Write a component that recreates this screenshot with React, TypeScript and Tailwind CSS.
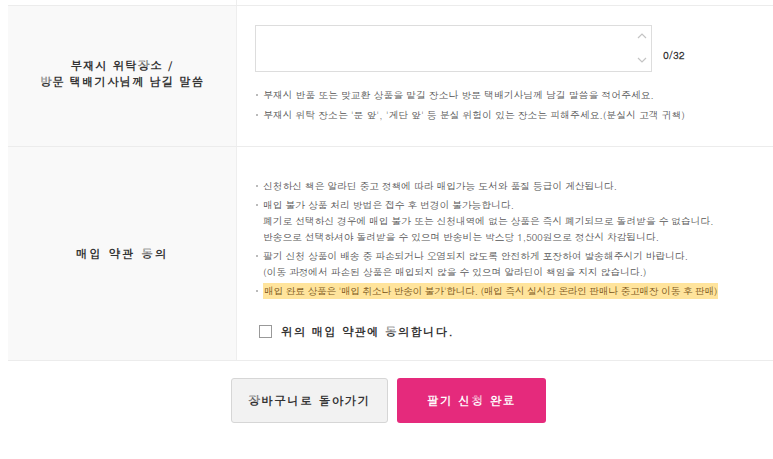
import React from 'react';

const font = "font-['Dotum','Noto_Sans_CJK_KR',sans-serif]";

function Note({ children, className = '' }: { children: React.ReactNode; className?: string }) {
  return (
    <li className={`relative pl-[8px] ${className}`}>
      <span className="absolute left-[1px] top-[7px] w-[2px] h-[2px] bg-[#bbb]" />
      {children}
    </li>
  );
}

export default function App() {
  return (
    <div className={`w-[773px] h-[459px] overflow-hidden bg-white text-[#333] ${font}`}>
      {/* end of previous row */}
      <div className="ml-2 h-[5px] grid grid-cols-[229px_1fr]">
        <div className="border-r border-[#eee]" />
        <div />
      </div>

      <div className="ml-2 border-t border-[#ececec]">
        {/* row 1 */}
        <div className="grid grid-cols-[229px_1fr] h-[141px] border-b border-[#ececec]">
          <div className="bg-[#f9f9f9] border-r border-[#eee] flex items-center justify-center text-center">
            <p className="text-[11.5px] font-bold leading-[16px] tracking-[1px] pb-[6px]">
              부재시 위탁장소 /<br />방문 택배기사님께 남길 말씀
            </p>
          </div>
          <div className="pl-[18px] pt-[19px]">
            <div className="flex items-end gap-[11px]">
              <div className="relative w-[397px] h-[47px] border border-[#ddd] bg-white">
                <svg className="absolute right-[4px] top-[6px]" width="10" height="8" viewBox="0 0 10 8">
                  <path d="M1 6 L5 2 L9 6" fill="none" stroke="#c4c4c4" strokeWidth="1.2" />
                </svg>
                <svg className="absolute right-[4px] bottom-[7px]" width="10" height="8" viewBox="0 0 10 8">
                  <path d="M1 2 L5 6 L9 2" fill="none" stroke="#c4c4c4" strokeWidth="1.2" />
                </svg>
              </div>
              <span className="text-[10px] font-bold text-[#333] mb-[9px]">0/32</span>
            </div>
            <ul className="mt-[15px] space-y-[4px] text-[10px] leading-[16px] tracking-[-0.2px] text-[#555]">
              <Note>부재시 반품 또는 맞교환 상품을 맡길 장소나 방문 택배기사님께 남길 말씀을 적어주세요.</Note>
              <Note>부재시 위탁 장소는 '문 앞', '계단 앞' 등 분실 위험이 있는 장소는 피해주세요.(분실시 고객 귀책)</Note>
            </ul>
          </div>
        </div>

        {/* row 2 */}
        <div className="grid grid-cols-[229px_1fr] h-[214px] border-b border-[#ececec]">
          <div className="bg-[#f9f9f9] border-r border-[#eee] flex items-center justify-center">
            <p className="text-[11.5px] font-bold tracking-[2px]">매입 약관 동의</p>
          </div>
          <div className="pl-[18px] pt-[31px]">
            <ul className="space-y-[3px] text-[10px] leading-[16px] tracking-[-0.3px] text-[#555]">
              <Note>신청하신 책은 알라딘 중고 정책에 따라 매입가능 도서와 품질 등급이 계산됩니다.</Note>
              <Note>
                매입 불가 상품 처리 방법은 접수 후 변경이 불가능합니다.
                <br />
                폐기로 선택하신 경우에 매입 불가 또는 신청내역에 없는 상품은 즉시 폐기되므로 돌려받을 수 없습니다.
                <br />
                반송으로 선택하셔야 돌려받을 수 있으며 반송비는 박스당 1,500원으로 정산시 차감됩니다.
              </Note>
              <Note>
                팔기 신청 상품이 배송 중 파손되거나 오염되지 않도록 안전하게 포장하여 발송해주시기 바랍니다.
                <br />
                (이동 과정에서 파손된 상품은 매입되지 않을 수 있으며 알라딘이 책임을 지지 않습니다.)
              </Note>
              <Note className="mt-[2px]">
                <span className="bg-[#ffe49c] text-[#7a5418] py-[1px] px-[1px] tracking-[-0.55px]">
                  매입 완료 상품은 '매입 취소나 반송이 불가'합니다. (매입 즉시 실시간 온라인 판매나 중고매장 이동 후 판매)
                </span>
              </Note>
            </ul>
            <label className="flex items-center gap-[9px] mt-[24px] ml-[4px]">
              <span className="w-[13px] h-[13px] border border-[#999] bg-white" />
              <span className="text-[11.5px] font-bold tracking-[1.2px] text-[#333]">위의 매입 약관에 동의합니다.</span>
            </label>
          </div>
        </div>
      </div>

      {/* buttons */}
      <div className="flex justify-center gap-[9px] mt-[17px] pl-[4px]">
        <button className="w-[157px] h-[45px] rounded-[3px] border border-[#d6d6d6] bg-[#f2f2f2] text-[11.5px] font-bold tracking-[1.5px] text-[#333]">
          장바구니로 돌아가기
        </button>
        <button className="w-[149px] h-[45px] rounded-[3px] bg-[#e52a7c] text-[11.5px] font-bold tracking-[1.5px] text-white">
          팔기 신청 완료
        </button>
      </div>
    </div>
  );
}
